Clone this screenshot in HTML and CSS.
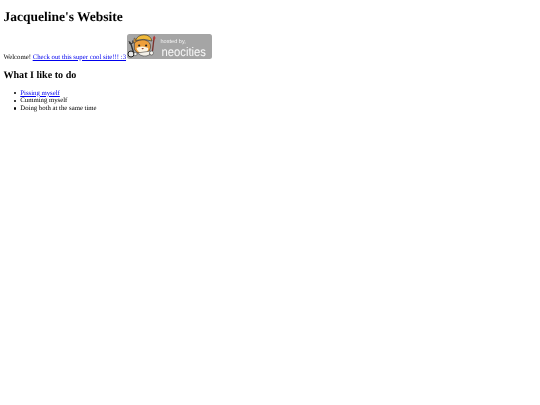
FILE: index.html
```html
<!DOCTYPE html>
<html lang="en">
<head>
    <meta charset="UTF-8">
    <meta name="viewport" content="width=device-width, initial-scale=1.0">
    <title>Jacqueline's Website</title>
    <link rel="stylesheet" href="styles.css">
</head>
<body>
    <h1>Jacqueline's Website</h1>

    <p class="welcome">Welcome! <a href="#">Check out this super cool site!!! :3</a>
        <!-- Neocities badge -->
        <svg class="badge" viewBox="0 0 85 25" width="85" height="25">
            <rect x="0" y="0" width="85" height="25" rx="2.5" fill="#a5a5a5"/>
            <circle cx="4" cy="20" r="3" fill="#e8e8e8" stroke="#222" stroke-width="1"/>
            <path d="M2.5 8 L4 10 L7 20" fill="none" stroke="#333" stroke-width="1.4"/>
            <path d="M2 7 L3 10 L6 9 L5.5 6.5" fill="none" stroke="#333" stroke-width=".9"/>
            <g class="cat">
                <path d="M4 9 L5 4 L8 7 Z" fill="#e59a35" stroke="#333" stroke-width=".5"/>
                <path d="M5 9 Q9 5 15 6 Q21 8 20 14 Q19 19 13 19.5 Q7 20 5 15 Z" fill="#ee9f3c" stroke="#333" stroke-width=".6"/>
                <path d="M7 14 Q12 11 18 14 Q18 19 13 19 Q8 19 7 14 Z" fill="#fbf3e2"/>
                <circle cx="9.5" cy="11.5" r="1" fill="#222"/>
                <circle cx="16" cy="11.5" r="1" fill="#222"/>
                <path d="M11.5 14 L14 14 L12.8 15.5 Z" fill="#8a3b2e"/>
                <path d="M6 6.5 Q8 1 14 .8 Q20 .8 21.5 7 Q14 4 6 6.5 Z" fill="#f0b93a" stroke="#333" stroke-width=".6"/>
                <path d="M8 19 Q13 24 19 21 L20 17 Z" fill="#f3f0e8" stroke="#333" stroke-width=".5"/>
                <circle cx="6" cy="20" r="1.6" fill="#f6f4ee" stroke="#333" stroke-width=".5"/>
            </g>
            <path d="M27 4 L25.5 17" stroke="#7a2f2a" stroke-width="1.3"/>
            <path d="M27.2 1.5 L28.6 4 L26.8 7 L25.8 4 Z" fill="#b53b3b"/>
            <circle cx="24.5" cy="19" r="2" fill="#f6f4ee" stroke="#333" stroke-width=".5"/>
            <text class="badge-small" x="33.5" y="9.2">hosted by,</text>
            <text class="badge-big" x="34.5" y="21.5" textLength="44.5" lengthAdjust="spacingAndGlyphs">neocities</text>
        </svg>
    </p>

    <h2>What I like to do</h2>

    <ul>
        <li><a href="#">Pissing myself</a></li>
        <li>Cumming myself</li>
        <li>Doing both at the same time</li>
    </ul>
</body>
</html>
```

FILE: styles.css
```css
body {
    margin: 3.4px;
    font-family: "Liberation Serif", "Times New Roman", serif;
    font-size: 6.75px;
    line-height: 7.6px;
    color: #000;
    background: #fff;
    text-rendering: geometricPrecision;
    filter: blur(0.25px);
}

h1 {
    font-size: 13.5px;
    line-height: 15.5px;
    margin: 6px 0 9px;
}

h2 {
    font-size: 10.1px;
    line-height: 11.5px;
    margin: 8.4px 0;
}

p {
    margin: 6.75px 0;
}

a {
    color: #0000ee;
}

ul {
    margin: 6.75px 0;
    padding-left: 16.9px;
    list-style: none;
}

li::before {
    content: '';
    display: inline-block;
    width: 2.4px;
    height: 2.4px;
    margin-left: -6.5px;
    margin-right: 4.1px;
    vertical-align: 0.3px;
    border-radius: 50%;
    background: #000;
}

.badge {
    margin-left: -1px;
    vertical-align: baseline;
}

.cat {
    transform: translate(2px, 0) scale(1.07, 1);
}

.badge-small {
    font-family: "Liberation Sans", sans-serif;
    font-size: 5.6px;
    fill: #f1f1f1;
}

.badge-big {
    font-family: "Liberation Sans", sans-serif;
    font-size: 12.4px;
    fill: #f8f8f8;
}
```
